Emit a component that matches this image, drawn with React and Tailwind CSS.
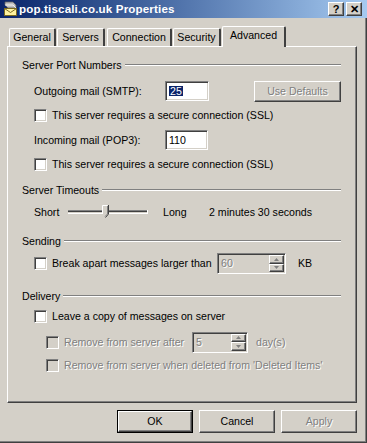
import { useState } from "react";

const sunken =
    "border border-t-[#808080] border-l-[#808080] border-b-white border-r-white shadow-[inset_1px_1px_0_#404040,inset_-1px_-1px_0_#d4d0c8]";
const raised =
    "border border-t-white border-l-white border-b-[#404040] border-r-[#404040] shadow-[inset_-1px_-1px_0_#808080]";
const dimText = "text-[#808080] [text-shadow:1px_1px_0_#ffffff]";

export default function App() {
    const [leaveCopy, setLeaveCopy] = useState(false);

    return (
        <div className="w-[367px] h-[443px] bg-[#d4d0c8] flex flex-col font-['Liberation_Sans',Arial,sans-serif] text-[10.6px] text-black leading-none whitespace-nowrap shadow-[inset_-1px_-1px_0_#404040,inset_-2px_-2px_0_#808080] overflow-hidden select-none">
            <TitleBar />

            <div className="flex flex-col pl-[7px] pr-[10px] mt-[8px]">
                <Tabs />
                <div className="relative h-[357px] border border-t-white border-l-white border-b-[#404040] border-r-[#404040] shadow-[inset_-1px_-1px_0_#808080] flex flex-col pl-[26px] pr-[15px]">
                    <GroupHeader title="Server Port Numbers" className="mt-[11px] -ml-[12px]" />

                    <div className="flex items-center h-[20px] mt-[9px]">
                        <span className="w-[131px]">Outgoing mail (SMTP):</span>
                        <div className={`${sunken} w-[44px] h-[20px] bg-white flex items-center pl-[3px]`}>
                            <span className="bg-[#0a246a] text-white px-px">25</span>
                        </div>
                        <button className={`${raised} ml-auto w-[87px] h-[21px] ${dimText}`}>
                            Use Defaults
                        </button>
                    </div>

                    <CheckRow className="mt-[8px]" label="This server requires a secure connection (SSL)" />

                    <div className="flex items-center h-[20px] mt-[8px]">
                        <span className="w-[131px]">Incoming mail (POP3):</span>
                        <div className={`${sunken} w-[43px] h-[20px] bg-white flex items-center pl-[3px]`}>
                            110
                        </div>
                    </div>

                    <CheckRow className="mt-[8px]" label="This server requires a secure connection (SSL)" />

                    <GroupHeader title="Server Timeouts" className="mt-[12px] -ml-[12px]" />

                    <div className="flex items-center h-[18px] mt-[6px]">
                        <span className="w-[34px]">Short</span>
                        <Slider />
                        <span className="ml-[13px] w-[46px]">Long</span>
                        <span>2 minutes 30 seconds</span>
                    </div>

                    <GroupHeader title="Sending" className="mt-[13px] -ml-[12px]" />

                    <div className="flex items-center h-[21px] mt-[5px]">
                        <Checkbox />
                        <span className="ml-[5px] w-[165px]">Break apart messages larger than</span>
                        <Spinner value="60" width="w-[69px]" />
                        <span className="ml-[12px]">KB</span>
                    </div>

                    <GroupHeader title="Delivery" className="mt-[15px] -ml-[12px]" />

                    <CheckRow
                        className="mt-[7px]"
                        label="Leave a copy of messages on server"
                        checked={leaveCopy}
                        onChange={() => setLeaveCopy(!leaveCopy)}
                    />

                    <div className="flex items-center h-[20px] mt-[9px] pl-[12px]">
                        <Checkbox disabled />
                        <span className={`ml-[5px] w-[128px] ${dimText}`}>Remove from server after</span>
                        <Spinner value="5" width="w-[56px]" />
                        <span className={`ml-[8px] ${dimText}`}>day(s)</span>
                    </div>

                    <div className="pl-[12px] mt-[7px]">
                        <CheckRow disabled label="Remove from server when deleted from 'Deleted Items'" />
                    </div>
                </div>
            </div>

            <div className="flex justify-end gap-[6px] pr-[10px] mt-[7px]">
                <div className="border border-black">
                    <button className={`${raised} w-[74px] h-[21px]`}>OK</button>
                </div>
                <button className={`${raised} w-[76px] h-[23px]`}>Cancel</button>
                <button className={`${raised} w-[76px] h-[23px] ${dimText}`}>Apply</button>
            </div>
        </div>
    );
}

const TitleBar = () => {
    return (
        <div className="h-[18px] flex items-center bg-gradient-to-r from-[#0a246a] to-[#a6caf0] pl-[2px] pr-[5px]">
            <MailIcon />
            <span className="ml-[1px] text-white font-bold text-[11.6px] tracking-[0.15px] font-['Liberation_Sans',Arial,sans-serif]">
                pop.tiscali.co.uk Properties
            </span>
            <div className="ml-auto flex gap-[2px]">
                <CaptionButton>?</CaptionButton>
                <CaptionButton>✕</CaptionButton>
            </div>
        </div>
    );
};

const CaptionButton = ({ children }) => {
    return (
        <div className={`${raised} w-[16px] h-[14px] bg-[#d4d0c8] flex items-center justify-center font-bold text-[11px] leading-none`}>
            {children}
        </div>
    );
};

const MailIcon = () => {
    return (
        <svg width="16" height="16" viewBox="0 0 16 16">
            {/* server */}
            <path d="M3 1 L11 1 L14 4 L14 7 L6 7 L3 4 Z" fill="#c0c0c0" stroke="#606060" strokeWidth="0.8" />
            <path d="M3 4 L11 4 L14 7" fill="none" stroke="#ffffff" strokeWidth="0.8" />
            {/* envelope */}
            <rect x="2.5" y="7.5" width="12" height="7" fill="#fff3a0" stroke="#7a6a20" />
            <path d="M2.5 7.5 L8.5 11.5 L14.5 7.5" fill="none" stroke="#7a6a20" />
        </svg>
    );
};

const Tabs = () => {
    const tabs = [
        { name: "General", w: "w-[47px]", ml: "ml-[2px]" },
        { name: "Servers", w: "w-[48px]", ml: "ml-[1px]" },
        { name: "Connection", w: "w-[65px]", ml: "ml-[2px]" },
        { name: "Security", w: "w-[48px]", ml: "ml-[1px]" },
    ];
    return (
        <div className="flex items-end h-[20px]">
            {tabs.map((t) => (
                <div
                    key={t.name}
                    className={`${t.w} ${t.ml} h-[18px] flex items-center justify-center border-t border-l border-t-white border-l-white border-r-2 border-r-[#404040] rounded-tl-[2px] rounded-tr-[2px]`}
                >
                    {t.name}
                </div>
            ))}
            <div className="relative z-10 -mb-px ml-[1px] w-[64px] h-[21px] pb-[3px] bg-[#d4d0c8] flex items-center justify-center border-t border-l border-t-white border-l-white border-r-2 border-r-[#404040] rounded-tl-[2px] rounded-tr-[2px]">
                Advanced
            </div>
        </div>
    );
};

const GroupHeader = ({ title, className = "" }) => {
    return (
        <div className={`flex items-center h-[14px] ${className}`}>
            <span>{title}</span>
            <div className="flex-1 ml-[3px] h-[2px] border-t border-t-[#808080] border-b border-b-white" />
        </div>
    );
};

const Checkbox = ({ disabled, checked, onChange }) => {
    return (
        <div
            onClick={disabled ? undefined : onChange}
            className={`${sunken} w-[13px] h-[13px] shrink-0 flex items-center justify-center ${disabled ? "bg-[#d4d0c8]" : "bg-white"}`}
        >
            {checked && (
                <svg width="7" height="7" viewBox="0 0 7 7">
                    <path d="M0 2 L2 4 L7 -1 M0 3 L2 5 L7 0 M0 4 L2 6 L7 1" stroke="#000" fill="none" />
                </svg>
            )}
        </div>
    );
};

const CheckRow = ({ label, disabled, checked, onChange, className = "" }) => {
    return (
        <div className={`flex items-center h-[13px] ${className}`}>
            <Checkbox disabled={disabled} checked={checked} onChange={onChange} />
            <span className={`ml-[5px] ${disabled ? dimText : ""}`}>{label}</span>
        </div>
    );
};

const Spinner = ({ value, width }) => {
    return (
        <div className={`${sunken} ${width} h-[21px] bg-[#d4d0c8] flex items-center`}>
            <span className={`pl-[3px] flex-1 ${dimText}`}>{value}</span>
            <div className="flex flex-col w-[15px] h-[17px] mr-px">
                <SpinButton up />
                <SpinButton />
            </div>
        </div>
    );
};

const SpinButton = ({ up }) => {
    return (
        <div className={`${raised} flex-1 flex items-center justify-center bg-[#d4d0c8]`}>
            <svg width="5" height="3" viewBox="0 0 5 3">
                <path d={up ? "M2.5 0 L5 3 L0 3 Z" : "M0 0 L5 0 L2.5 3 Z"} fill="#808080" />
            </svg>
        </div>
    );
};

const Slider = () => {
    return (
        <svg width="82" height="14" viewBox="0 0 82 14">
            <rect x="0" y="5" width="80" height="1" fill="#808080" />
            <rect x="0" y="6" width="80" height="1" fill="#404040" />
            <rect x="0" y="7" width="80" height="1" fill="#d4d0c8" />
            <rect x="0" y="8" width="80" height="1" fill="#ffffff" />
            <rect x="79" y="5" width="1" height="4" fill="#ffffff" />
            <path d="M34 0 L40 0 L40 9 L37 12 L34 9 Z" fill="#d4d0c8" />
            <path d="M34.5 9 L34.5 0.5 L39.5 0.5" fill="none" stroke="#ffffff" />
            <path d="M40.5 0 L40.5 9 L37.5 12.5" fill="none" stroke="#404040" />
            <path d="M39.5 1 L39.5 9 L37 11.5" fill="none" stroke="#808080" />
        </svg>
    );
};
